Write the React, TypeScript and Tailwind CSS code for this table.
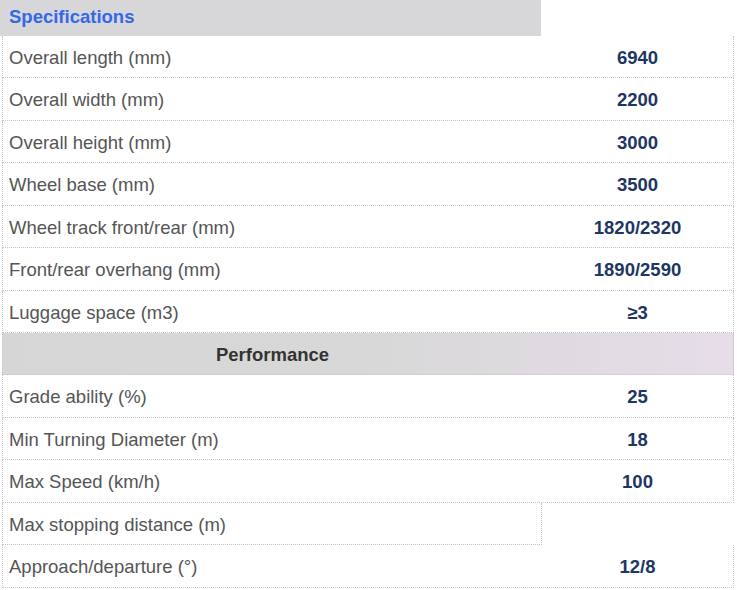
import type { ReactNode } from 'react'

type Row = { label: string; value?: string; h: number }

const SPECS: Row[] = [
  { label: 'Overall length (mm)', value: '6940', h: 42 },
  { label: 'Overall width (mm)', value: '2200', h: 43 },
  { label: 'Overall height (mm)', value: '3000', h: 42 },
  { label: 'Wheel base (mm)', value: '3500', h: 43 },
  { label: 'Wheel track front/rear (mm)', value: '1820/2320', h: 42 },
  { label: 'Front/rear overhang (mm)', value: '1890/2590', h: 43 },
  { label: 'Luggage space (m3)', value: '≥3', h: 42 },
]

const PERF: Row[] = [
  { label: 'Grade ability (%)', value: '25', h: 43 },
  { label: 'Min Turning Diameter (m)', value: '18', h: 42 },
  { label: 'Max Speed (km/h)', value: '100', h: 43 },
  { label: 'Max stopping distance (m)', h: 42 },
  { label: 'Approach/departure (°)', value: '12/8', h: 43 },
]

export default function App() {
  return (
    <div className="h-[590px] w-[737px] overflow-hidden bg-white font-['Liberation_Sans',Arial,sans-serif]">
      {/* Title */}
      <div className="flex h-[36px] w-[541px] items-center bg-[#d7d7da] pb-[3px] pl-[9px] text-[18.5px] font-bold text-[#3468e6]">
        Specifications
      </div>

      <div className="ml-[2px] w-[732px]">
        {SPECS.map((r) => (
          <SpecRow key={r.label} row={r} />
        ))}

        {/* Section header */}
        <div className="flex h-[42px] border-x border-b border-dotted border-[#c4c4cc] bg-gradient-to-r from-[#d6d6d6] via-[#d8d8d8] to-[#e6dde8]">
          <div className="flex w-[539px] items-center justify-center pt-[2px] text-[18.5px] font-bold text-[#333]">
            Performance
          </div>
          <div className="flex-1" />
        </div>

        {PERF.map((r) =>
          r.value ? (
            <SpecRow key={r.label} row={r} />
          ) : (
            <div key={r.label} className="flex" style={{ height: r.h }}>
              <div className="flex w-[540px] items-center border-x border-b border-dotted border-[#c4c4c4] pt-[2px] pl-[6px] text-[18.5px] text-[#555]">
                {r.label}
              </div>
            </div>
          ),
        )}
      </div>
    </div>
  )
}

function SpecRow({ row }: { row: Row }) {
  return (
    <div
      className="flex border-x border-b border-dotted border-[#c4c4cc] pt-[2px]"
      style={{ height: row.h }}
    >
      <Cell>{row.label}</Cell>
      <div className="flex flex-1 items-center justify-center text-[18.5px] font-bold text-[#1d3663]">
        {row.value}
      </div>
    </div>
  )
}

function Cell({ children }: { children: ReactNode }) {
  return (
    <div className="flex w-[539px] items-center pl-[6px] text-[18.5px] text-[#555]">
      {children}
    </div>
  )
}
